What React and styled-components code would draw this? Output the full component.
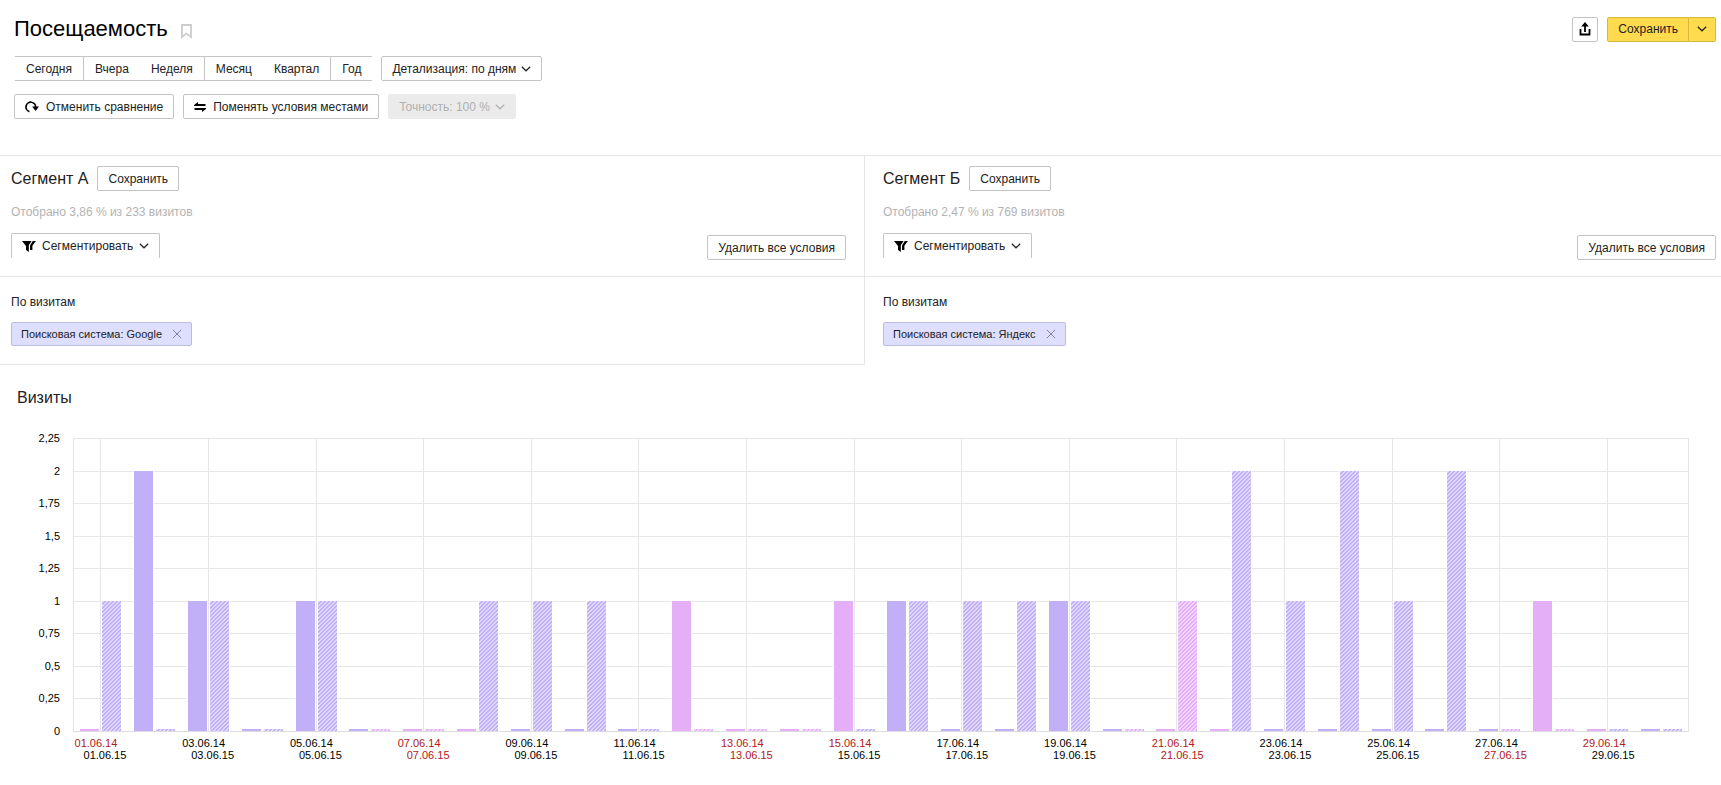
import React from "react";
import styled, { createGlobalStyle, css } from "styled-components";

const colors = {
  text: "#222222",
  muted: "#b3b3b3",
  border: "#c4c4c4",
  line: "#e6e6e6",
  yellow: "#ffdb4d",
  violet: "#c1b0f8",
  pink: "#e5aff8",
  weekend: "#b02020"
};

const GlobalStyle = createGlobalStyle`
  * {
    box-sizing: border-box;
  }

  body {
    margin: 0;
    background: #fff;
    color: ${colors.text};
    font-family: "Liberation Sans", Arial, sans-serif;
    font-size: 12px;
    line-height: 16px;
  }

  button {
    font: inherit;
    color: inherit;
    cursor: pointer;
  }
`;

const Header = styled.header`
  display: flex;
  justify-content: space-between;
  align-items: center;
  padding: 16px 5px 0 14px;
`;

const TitleGroup = styled.div`
  display: flex;
  align-items: center;
  gap: 13px;
`;

const Title = styled.h1`
  margin: 0;
  font-size: 22px;
  line-height: 26px;
  font-weight: 400;
  color: #000;
`;

const IconButton = styled.button`
  display: flex;
  padding: 0;
  border: none;
  background: none;
`;

const Actions = styled.div`
  display: flex;
  gap: 9px;
`;

const Button = styled.button`
  display: flex;
  align-items: center;
  gap: ${({ $gap }) => $gap || 5}px;
  height: 25px;
  padding: 0 ${({ $pad }) => $pad || 10}px;
  border: 1px solid ${colors.border};
  border-radius: 2px;
  background: #fff;
  white-space: nowrap;

  &:hover {
    border-color: #999;
  }

  &:disabled {
    border-color: #ebebeb;
    background: #ebebeb;
    color: #b0b0b0;
    cursor: default;
  }
`;

const SplitButton = styled.div`
  display: flex;
`;

const SaveButton = styled(Button)`
  border-color: #d9b93c;
  border-radius: 2px 0 0 2px;
  background: ${colors.yellow};
`;

const SaveMenuButton = styled(SaveButton)`
  border-left: none;
  border-radius: 0 2px 2px 0;
`;

const Toolbar = styled.div`
  display: flex;
  gap: 9px;
  padding: ${({ $top }) => $top}px 14px 0;
`;

const Periods = styled.div`
  display: flex;
  height: 25px;
  margin-left: 1px;
  border: solid ${colors.border};
  border-width: 1px 0;
`;

const Period = styled.button`
  padding: 0 11px;
  border: none;
  background: none;

  ${({ $divided }) =>
    $divided &&
    css`
      border-left: 1px solid ${colors.border};
    `}
`;

const Segments = styled.div`
  display: grid;
  grid-template-columns: 865fr 856fr;
  margin-top: 36px;
  border-top: 1px solid ${colors.line};
`;

const Segment = styled.section`
  border-right: ${({ $first }) => ($first ? `1px solid ${colors.line}` : "none")};
`;

const SegmentHead = styled.div`
  padding: 10px ${({ $first }) => ($first ? 18 : 5)}px 16px
    ${({ $first }) => ($first ? 11 : 18)}px;
  border-bottom: 1px solid ${colors.line};
`;

const SegmentTitleRow = styled.div`
  display: flex;
  align-items: center;
  gap: 9px;
`;

const SegmentTitle = styled.h2`
  margin: 0;
  font-size: 16px;
  line-height: 24px;
  font-weight: 400;
`;

const Selected = styled.p`
  margin: 13px 0;
  color: ${colors.muted};
`;

const SegmentActions = styled.div`
  display: flex;
  justify-content: space-between;
  align-items: flex-end;
`;

const SegmentMenu = styled(Button)`
  align-self: flex-start;
  border-bottom: none;
  border-radius: 2px 2px 0 0;
`;

const ClearButton = styled(Button)`
  margin-top: 2px;
`;

const Conditions = styled.div`
  padding: 17px 18px 18px ${({ $first }) => ($first ? 11 : 18)}px;
  border-bottom: ${({ $first }) => ($first ? `1px solid ${colors.line}` : "none")};
`;

const ConditionsTitle = styled.h3`
  margin: 0 0 12px;
  font-size: 12px;
  line-height: 16px;
  font-weight: 400;
`;

const Tag = styled.div`
  display: flex;
  align-items: center;
  gap: 10px;
  width: max-content;
  height: 24px;
  padding: 0 9px;
  border: 1px solid #bdbbdf;
  border-radius: 2px;
  background: #dedeff;
  font-size: 11px;
`;

const ChartTitle = styled.h2`
  margin: 0;
  padding: 21px 17px 0;
  font-size: 16px;
  line-height: 24px;
  font-weight: 400;
`;

const Chart = styled.div`
  display: grid;
  grid-template-columns: 60px 1fr;
  column-gap: 13px;
  margin: 22px 32px 0 0;
  color: #000;
  font-size: 11px;
  line-height: 12px;
`;

const YAxis = styled.div`
  display: flex;
  flex-direction: column;
  justify-content: space-between;
  height: 305px;
  text-align: right;
`;

const Plot = styled.div`
  display: grid;
  height: 294px;
  margin-top: 6px;
  border-left: 1px solid ${colors.line};
  border-right: 1px solid ${colors.line};
  border-bottom: 1px solid #dcdce2;
`;

const GridRows = styled.div`
  grid-area: 1 / 1;
  display: grid;
  grid-template-rows: repeat(9, 1fr);
`;

const GridRow = styled.div`
  border-top: 1px solid ${colors.line};
`;

const Days = styled.div`
  grid-area: 1 / 1;
  display: grid;
  grid-template-columns: repeat(30, 1fr);
`;

const Day = styled.div`
  display: flex;
  justify-content: center;
  align-items: flex-end;
  gap: 3px;
  background: ${({ $marked }) =>
    $marked
      ? `linear-gradient(${colors.line}, ${colors.line}) center / 1px 100% no-repeat`
      : "none"};
`;

const Bar = styled.div`
  width: 19px;
  min-height: 2px;
  background-color: ${({ $weekend }) => ($weekend ? colors.pink : colors.violet)};
  box-shadow: 0 0 0 1px #fff;
  clip-path: inset(-1px -1px 0);

  ${({ $striped }) =>
    $striped &&
    css`
      background-image: linear-gradient(
        135deg,
        rgba(255, 255, 255, 0.5) 25%,
        transparent 25% 50%,
        rgba(255, 255, 255, 0.5) 50% 75%,
        transparent 75%
      );
      background-size: 4px 4px;
    `}
`;

const Dates = styled.div`
  grid-column: 2;
  display: grid;
  grid-template-columns: repeat(15, 2fr);
`;

const DatePair = styled.div`
  display: flex;
  flex-direction: column;
  width: 50%;
  align-items: center;
`;

const DateLabel = styled.time`
  color: ${({ $weekend }) => ($weekend ? colors.weekend : "#000")};
  padding-left: ${({ $shifted }) => ($shifted ? 10 : 0)}px;
  padding-right: ${({ $shifted }) => ($shifted ? 0 : 8)}px;
`;

const Chevron = () => (
  <svg width="10" height="6" viewBox="0 0 10 6" fill="none" stroke="currentColor">
    <path d="M.8 .8 5 4.8 9.2 .8" strokeWidth="1.2" />
  </svg>
);

const BookmarkIcon = () => (
  <svg width="11" height="19" viewBox="0 0 11 19" fill="none" stroke="#ccc">
    <path d="M1 5H10V17L5.5 13.6 1 17Z" strokeWidth="1.8" />
  </svg>
);

const ShareIcon = () => (
  <svg width="12" height="14" viewBox="0 0 12 14" fill="none" stroke="#000">
    <path d="M1.5 7V12.5H10.5V7M6 10V3" strokeWidth="1.8" />
    <path d="M2.2 4.5 6 0 9.8 4.5Z" fill="#000" stroke="none" />
  </svg>
);

const ResetIcon = () => (
  <svg width="14" height="12" viewBox="0 0 14 12" fill="none" stroke="#000">
    <path d="M4.4 10.6A4.8 4.8 0 1 1 10.6 6.2" strokeWidth="1.7" />
    <path d="M7.2 5.6H14L10.6 10Z" fill="#000" stroke="none" />
  </svg>
);

const SwapIcon = () => (
  <svg width="12" height="10" viewBox="0 0 12 10" fill="#000">
    <path d="M0 3 4 0V2H11.5V4H0ZM12 7 8 10V8H.5V6H12Z" />
  </svg>
);

const FunnelIcon = () => (
  <svg width="14" height="11" viewBox="0 0 14 11" fill="#000">
    <path d="M0 0H9.6L6.8 4.2V11L4 9V5Z" />
    <path d="M10.8 0H13.8L10.4 4.8V9H8V4.4Z" />
  </svg>
);

const CrossIcon = () => (
  <svg width="10" height="10" viewBox="0 0 10 10" stroke="#84849c">
    <path d="M.8.8 9.2 9.2M9.2.8.8 9.2" strokeWidth="1" />
  </svg>
);

const periods = [
  { label: "Сегодня" },
  { label: "Вчера", divided: true },
  { label: "Неделя" },
  { label: "Месяц", divided: true },
  { label: "Квартал" },
  { label: "Год", divided: true }
];

const segments = [
  { name: "А", selected: "Отобрано 3,86 % из 233 визитов", engine: "Google" },
  { name: "Б", selected: "Отобрано 2,47 % из 769 визитов", engine: "Яндекс" }
];

const ticks = ["2,25", "2", "1,75", "1,5", "1,25", "1", "0,75", "0,5", "0,25", "0"];

const maxVisits = 2.25;

const visits2014 = { 2: 2, 3: 1, 5: 1, 12: 1, 15: 1, 16: 1, 19: 1, 28: 1 };
const visits2015 = {
  1: 1, 3: 1, 5: 1, 8: 1, 9: 1, 10: 1, 16: 1, 17: 1, 18: 1, 19: 1,
  21: 1, 22: 2, 23: 1, 24: 2, 25: 1, 26: 2
};
const weekends2014 = [1, 7, 8, 12, 13, 14, 15, 21, 22, 28, 29];
const weekends2015 = [6, 7, 12, 13, 14, 20, 21, 27, 28];

const days = Array.from({ length: 30 }, (_, i) => i + 1);

const barHeight = (visits = 0) => ({ height: `${(visits / maxVisits) * 100}%` });

const SegmentPanel = ({ segment, first }) => (
  <Segment $first={first}>
    <SegmentHead $first={first}>
      <SegmentTitleRow>
        <SegmentTitle>Сегмент {segment.name}</SegmentTitle>
        <Button type="button">Сохранить</Button>
      </SegmentTitleRow>
      <Selected>{segment.selected}</Selected>
      <SegmentActions>
        <SegmentMenu type="button" $gap={6}>
          <FunnelIcon />
          Сегментировать
          <Chevron />
        </SegmentMenu>
        <ClearButton type="button">Удалить все условия</ClearButton>
      </SegmentActions>
    </SegmentHead>
    <Conditions $first={first}>
      <ConditionsTitle>По визитам</ConditionsTitle>
      <Tag>
        Поисковая система: {segment.engine}
        <IconButton type="button" aria-label="Удалить условие">
          <CrossIcon />
        </IconButton>
      </Tag>
    </Conditions>
  </Segment>
);

const VisitsChart = () => (
  <Chart>
    <YAxis>
      {ticks.map((tick) => (
        <span key={tick}>{tick}</span>
      ))}
    </YAxis>
    <Plot>
      <GridRows>
        {ticks.slice(1).map((tick) => (
          <GridRow key={tick} />
        ))}
      </GridRows>
      <Days>
        {days.map((day) => (
          <Day key={day} $marked={day % 2 === 1}>
            <Bar $weekend={weekends2014.includes(day)} style={barHeight(visits2014[day])} />
            <Bar
              $striped
              $weekend={weekends2015.includes(day)}
              style={barHeight(visits2015[day])}
            />
          </Day>
        ))}
      </Days>
    </Plot>
    <Dates>
      {days
        .filter((day) => day % 2 === 1)
        .map((day) => {
          const date = `${String(day).padStart(2, "0")}.06`;
          return (
            <DatePair key={day}>
              <DateLabel $weekend={weekends2014.includes(day)}>{date}.14</DateLabel>
              <DateLabel $shifted $weekend={weekends2015.includes(day)}>
                {date}.15
              </DateLabel>
            </DatePair>
          );
        })}
    </Dates>
  </Chart>
);

const App = () => (
  <>
    <GlobalStyle />
    <Header>
      <TitleGroup>
        <Title>Посещаемость</Title>
        <IconButton type="button" aria-label="В закладки">
          <BookmarkIcon />
        </IconButton>
      </TitleGroup>
      <Actions>
        <Button type="button" $pad={6} aria-label="Поделиться">
          <ShareIcon />
        </Button>
        <SplitButton>
          <SaveButton type="button">Сохранить</SaveButton>
          <SaveMenuButton type="button" $pad={8} aria-label="Варианты сохранения">
            <Chevron />
          </SaveMenuButton>
        </SplitButton>
      </Actions>
    </Header>
    <main>
      <Toolbar $top={14}>
        <Periods>
          {periods.map(({ label, divided }) => (
            <Period key={label} type="button" $divided={divided}>
              {label}
            </Period>
          ))}
        </Periods>
        <Button type="button">
          Детализация: по дням
          <Chevron />
        </Button>
      </Toolbar>
      <Toolbar $top={13}>
        <Button type="button" $gap={7}>
          <ResetIcon />
          Отменить сравнение
        </Button>
        <Button type="button" $gap={7}>
          <SwapIcon />
          Поменять условия местами
        </Button>
        <Button type="button" disabled>
          Точность: 100 %
          <Chevron />
        </Button>
      </Toolbar>
      <Segments>
        {segments.map((segment, index) => (
          <SegmentPanel key={segment.name} segment={segment} first={index === 0} />
        ))}
      </Segments>
      <ChartTitle>Визиты</ChartTitle>
      <VisitsChart />
    </main>
  </>
);

export default App;
